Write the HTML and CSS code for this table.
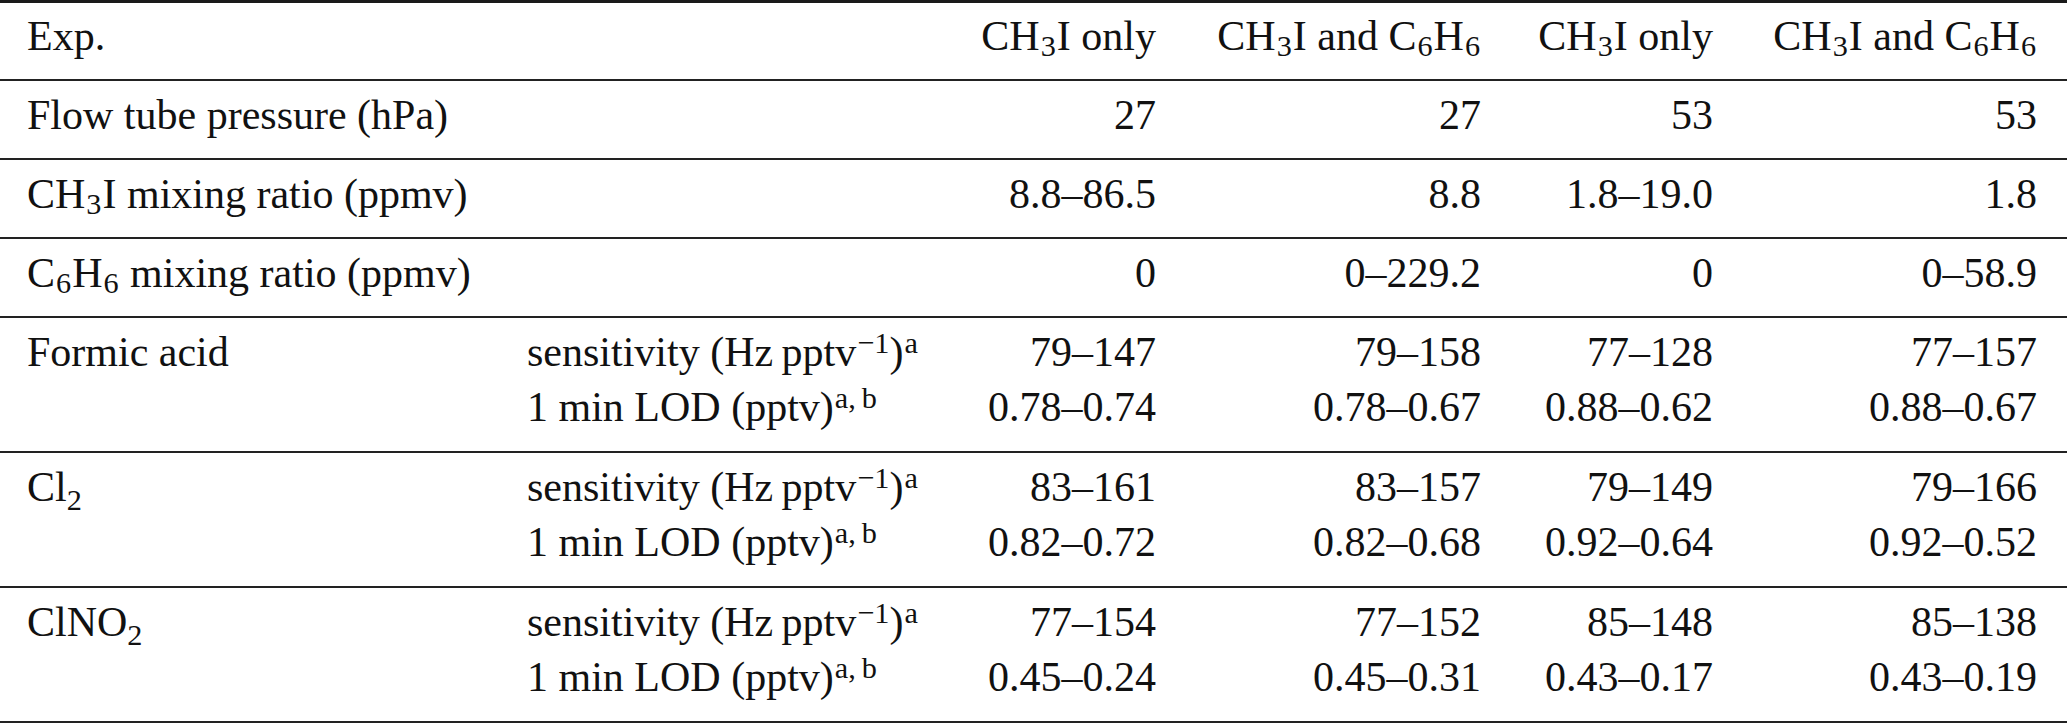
FILE: index.html
```html
<!DOCTYPE html>
<html>
<head>
<meta charset="utf-8">
<link rel="stylesheet" href="styles.css">
</head>
<body>
<table class="tbl">
  <colgroup>
    <col class="c1"><col class="c2"><col class="c3"><col class="c4"><col class="c5"><col class="c6">
  </colgroup>
  <thead>
    <tr class="row head">
      <th class="label" colspan="2">Exp.</th>
      <th class="num">CH<sub>3</sub>I only</th>
      <th class="num">CH<sub>3</sub>I and C<sub>6</sub>H<sub>6</sub></th>
      <th class="num">CH<sub>3</sub>I only</th>
      <th class="num last">CH<sub>3</sub>I and C<sub>6</sub>H<sub>6</sub></th>
    </tr>
  </thead>
  <tbody>
    <tr class="row">
      <td class="label" colspan="2">Flow tube pressure (hPa)</td>
      <td class="num">27</td>
      <td class="num">27</td>
      <td class="num">53</td>
      <td class="num last">53</td>
    </tr>
    <tr class="row">
      <td class="label" colspan="2">CH<sub>3</sub>I mixing ratio (ppmv)</td>
      <td class="num">8.8–86.5</td>
      <td class="num">8.8</td>
      <td class="num">1.8–19.0</td>
      <td class="num last">1.8</td>
    </tr>
    <tr class="row">
      <td class="label" colspan="2">C<sub>6</sub>H<sub>6</sub> mixing ratio (ppmv)</td>
      <td class="num">0</td>
      <td class="num">0–229.2</td>
      <td class="num">0</td>
      <td class="num last">0–58.9</td>
    </tr>
    <tr class="row dbl">
      <td class="label">Formic acid</td>
      <td class="param">sensitivity (Hz&#8201;pptv<sup>−1</sup>)<sup>a</sup><br>1 min LOD (pptv)<sup>a,&#8201;b</sup></td>
      <td class="num">79–147<br>0.78–0.74</td>
      <td class="num">79–158<br>0.78–0.67</td>
      <td class="num">77–128<br>0.88–0.62</td>
      <td class="num last">77–157<br>0.88–0.67</td>
    </tr>
    <tr class="row dbl">
      <td class="label">Cl<sub class="deep">2</sub></td>
      <td class="param">sensitivity (Hz&#8201;pptv<sup>−1</sup>)<sup>a</sup><br>1 min LOD (pptv)<sup>a,&#8201;b</sup></td>
      <td class="num">83–161<br>0.82–0.72</td>
      <td class="num">83–157<br>0.82–0.68</td>
      <td class="num">79–149<br>0.92–0.64</td>
      <td class="num last">79–166<br>0.92–0.52</td>
    </tr>
    <tr class="row dbl">
      <td class="label">ClNO<sub class="deep">2</sub></td>
      <td class="param">sensitivity (Hz&#8201;pptv<sup>−1</sup>)<sup>a</sup><br>1 min LOD (pptv)<sup>a,&#8201;b</sup></td>
      <td class="num">77–154<br>0.45–0.24</td>
      <td class="num">77–152<br>0.45–0.31</td>
      <td class="num">85–148<br>0.43–0.17</td>
      <td class="num last">85–138<br>0.43–0.19</td>
    </tr>
  </tbody>
</table>
</body>
</html>
```

FILE: styles.css
```css
html, body {
  margin: 0;
  padding: 0;
  background: #ffffff;
}

.tbl {
  width: 2067px;
  border-collapse: collapse;
  table-layout: fixed;
  font-family: "Liberation Serif", "Times New Roman", serif;
  font-size: 42px;
  color: #111111;
  border-top: 3px solid #1a1a1a;
}

.c1 { width: 527px; }
.c2 { width: 433px; }
.c3 { width: 196px; }
.c4 { width: 325px; }
.c5 { width: 232px; }
.c6 { width: 354px; }

.row {
  border-bottom: 2px solid #222222;
}

.row th,
.row td {
  font-weight: normal;
  line-height: 55px;
  padding: 7px 0 15px 0;
  vertical-align: top;
  white-space: nowrap;
}

.row.head th {
  padding-top: 6px;
}

.row.dbl td {
  padding-bottom: 16px;
}

.label {
  text-align: left;
  padding-left: 27px !important;
}

.param {
  text-align: left;
}

.num {
  text-align: right;
}

.num.last {
  padding-right: 30px !important;
}

sub {
  font-size: 0.72em;
  line-height: 0;
  vertical-align: -0.2em;
  padding: 0 1px;
}

sub.deep {
  vertical-align: -0.3em;
  padding: 0;
}

sup {
  font-size: 0.72em;
  line-height: 0;
  vertical-align: 0.42em;
  padding-left: 1px;
}
```
